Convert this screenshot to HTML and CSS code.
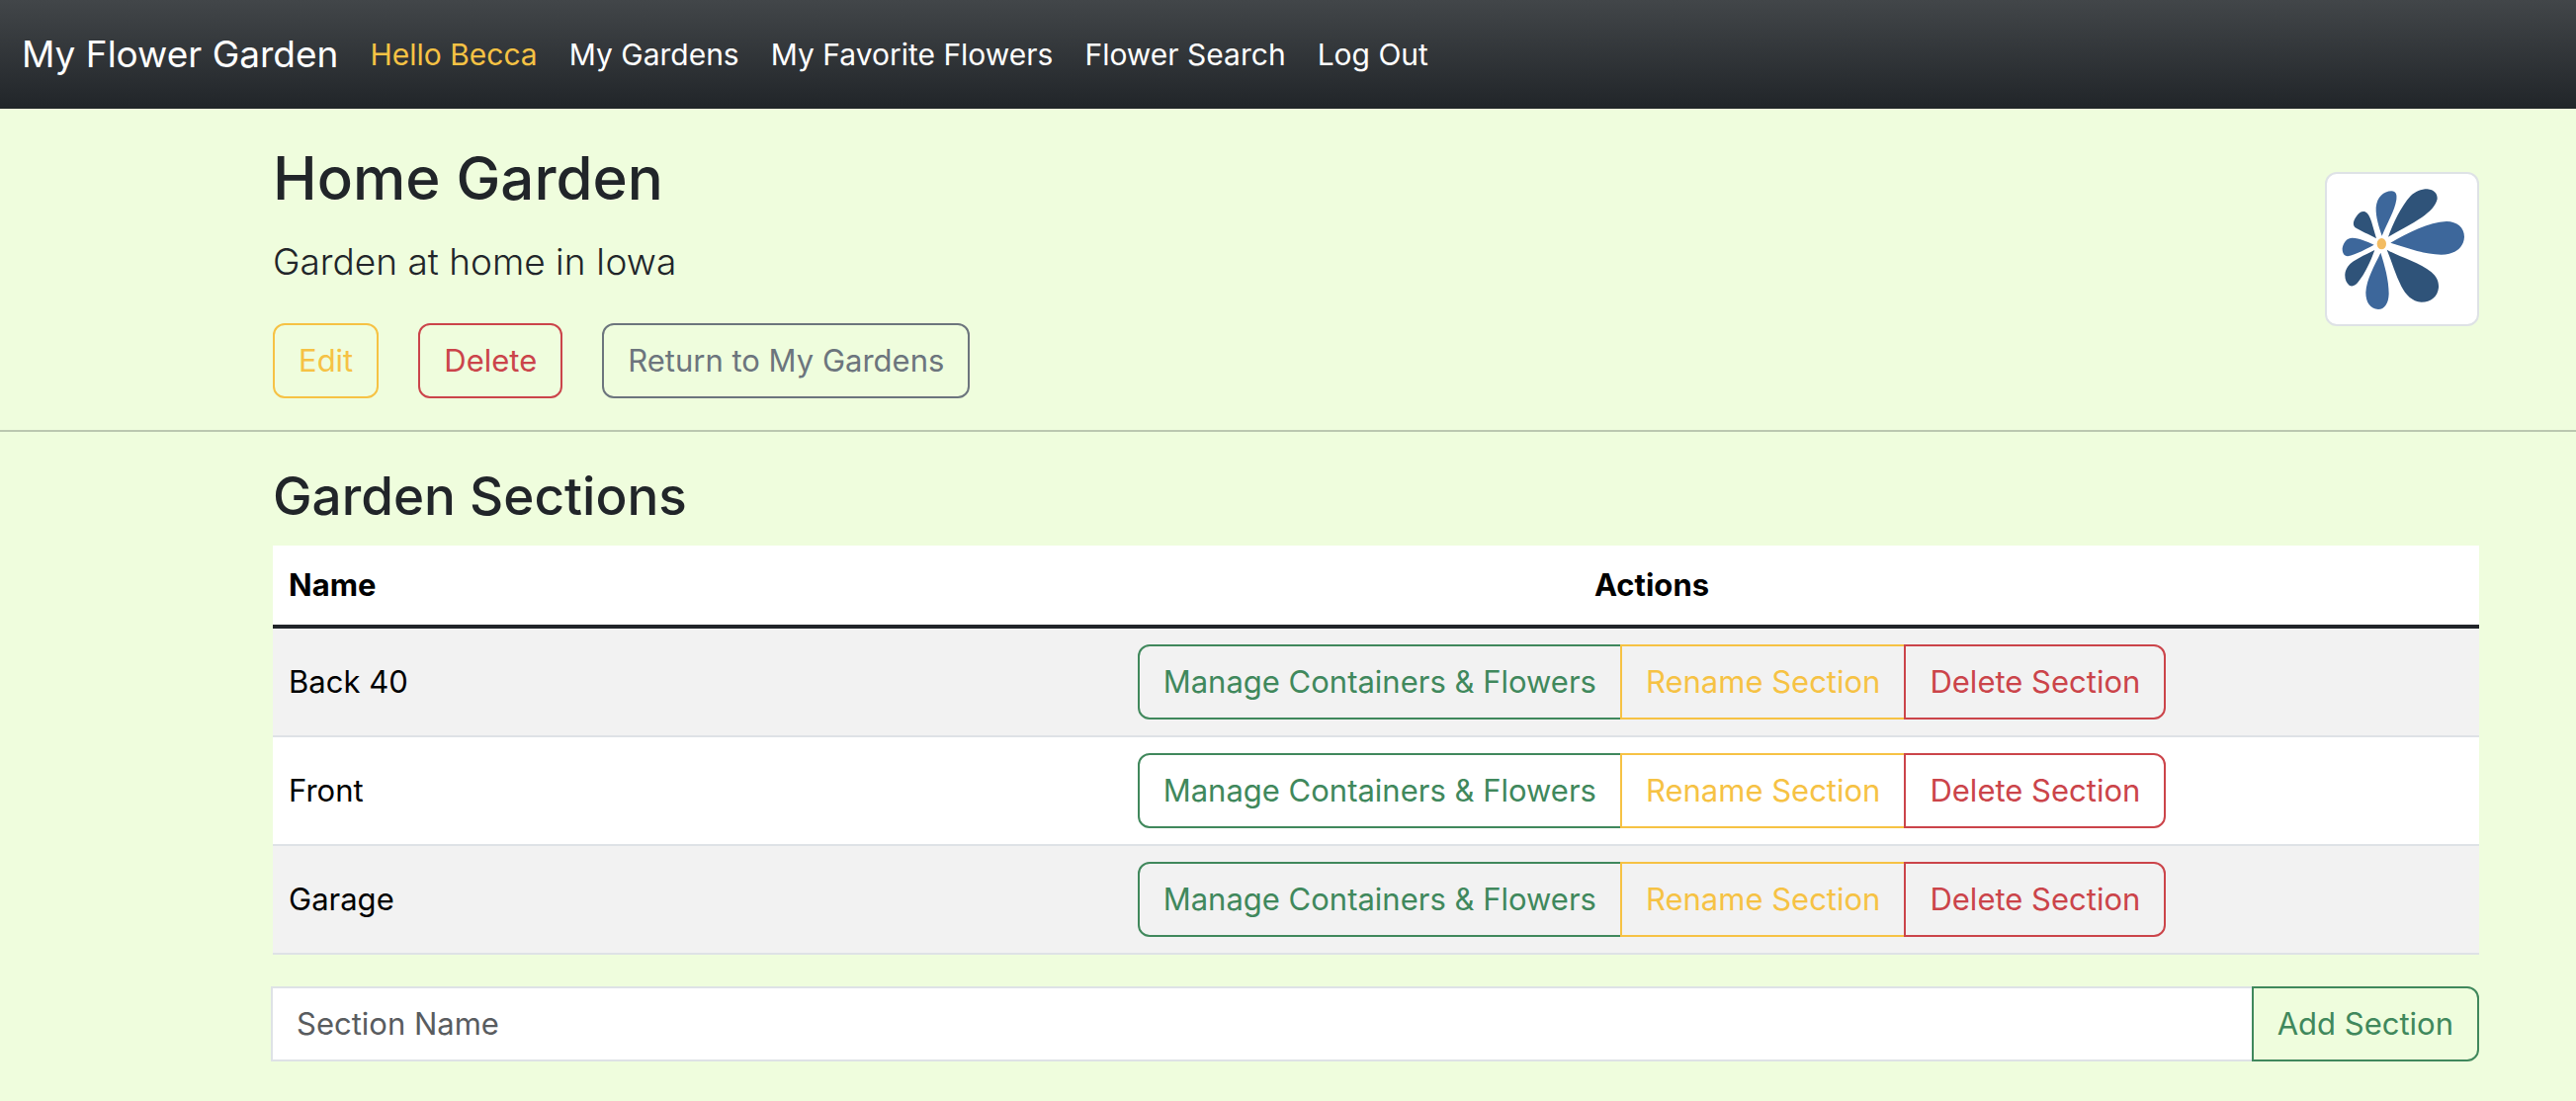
FILE: index.html
```html
<!DOCTYPE html>
<html lang="en">
<head>
  <meta charset="utf-8">
  <meta name="viewport" content="width=device-width, initial-scale=1">
  <title>My Flower Garden</title>
  <link rel="stylesheet" href="styles.css">
</head>
<body>
  <nav class="navbar">
    <a class="brand" href="#">My Flower Garden</a>
    <a class="nav-link greeting" href="#">Hello Becca</a>
    <a class="nav-link" href="#">My Gardens</a>
    <a class="nav-link" href="#">My Favorite Flowers</a>
    <a class="nav-link" href="#">Flower Search</a>
    <a class="nav-link" href="#">Log Out</a>
  </nav>

  <header class="garden">
    <div class="garden-info">
      <h1 class="garden-title">Home Garden</h1>
      <p class="lead">Garden at home in Iowa</p>
      <div class="garden-actions">
        <button type="button" class="btn warning">Edit</button>
        <button type="button" class="btn danger">Delete</button>
        <button type="button" class="btn secondary">Return to My Gardens</button>
      </div>
    </div>
    <div class="thumbnail">
      <svg class="flower" viewBox="66 72 408 408" role="img" aria-label="Flower">
        <g fill="#3d679b">
          <path d="M209 236C200 208 190 180 191 150C194 118 214 101 238 100C252 101 255 110 253 126C248 160 224 198 209 236Z"/>
          <path d="M235 257C290 225 350 195 405 192C437 192 459 211 459 239C457 274 428 293 389 293C335 292 285 272 235 257Z"/>
          <path d="M205 287C217 325 230 368 230 412C229 442 217 459 198 459C174 458 160 438 160 408C162 367 187 326 205 287Z"/>
          <path d="M185 263C158 277 128 294 105 298C93 297 88 286 89 273C93 253 104 242 119 242C142 243 164 253 185 263Z"/>
        </g>
        <g fill="#2f5379">
          <path d="M228 239C244 197 266 148 296 115C311 101 327 94 347 94C367 96 378 107 377 124C373 145 353 164 331 179C297 202 260 219 228 239Z"/>
          <path d="M224 278C265 302 323 315 359 346C375 360 382 374 381 393C378 421 358 437 329 437C300 435 281 414 268 389C249 352 239 314 224 278Z"/>
          <path d="M187 279C175 312 159 348 137 376C129 387 119 391 110 386C101 380 96 367 97 352C99 334 109 323 123 313C144 299 165 290 187 279Z"/>
          <path d="M192 244C171 232 142 220 127 210C119 200 123 188 132 176C139 166 148 160 158 163C168 168 172 178 177 192Z"/>
        </g>
        <ellipse cx="208" cy="260" rx="14" ry="17" fill="#f3bc62"/>
      </svg>
    </div>
  </header>

  <main class="sections">
    <h2 class="sections-title">Garden Sections</h2>
    <table class="table">
      <thead>
        <tr><th class="name-col" scope="col">Name</th><th class="actions-col" scope="col">Actions</th></tr>
      </thead>
      <tbody>
        <tr>
          <td>Back 40</td>
          <td class="actions-col"><div class="btn-group"><button type="button" class="btn success">Manage Containers &amp; Flowers</button><button type="button" class="btn warning">Rename Section</button><button type="button" class="btn danger">Delete Section</button></div></td>
        </tr>
        <tr>
          <td>Front</td>
          <td class="actions-col"><div class="btn-group"><button type="button" class="btn success">Manage Containers &amp; Flowers</button><button type="button" class="btn warning">Rename Section</button><button type="button" class="btn danger">Delete Section</button></div></td>
        </tr>
        <tr>
          <td>Garage</td>
          <td class="actions-col"><div class="btn-group"><button type="button" class="btn success">Manage Containers &amp; Flowers</button><button type="button" class="btn warning">Rename Section</button><button type="button" class="btn danger">Delete Section</button></div></td>
        </tr>
      </tbody>
    </table>
    <form class="add-form">
      <input class="text-input" type="text" placeholder="Section Name" aria-label="Section Name">
      <button type="button" class="btn success">Add Section</button>
    </form>
  </main>
</body>
</html>
```
FILE: styles.css
```css
*,
*::before,
*::after {
  box-sizing: border-box;
}

body {
  margin: 0;
  background: #effddd;
  color: #212529;
  font-family: Inter, Roboto, "Liberation Sans", sans-serif;
  font-size: 31px;
  line-height: 48px;
}

h1,
h2,
p {
  margin: 0;
}

.navbar {
  display: flex;
  align-items: center;
  gap: 32px;
  padding: 25px 22px;
  background: linear-gradient(#424649, #212529);
}

.brand,
.nav-link {
  color: #fff;
  text-decoration: none;
  white-space: nowrap;
}

.brand {
  font-size: 37px;
  line-height: 60px;
}

.nav-link {
  font-size: 30px;
}

.greeting {
  color: #f6c244;
}

.garden {
  display: flex;
  justify-content: space-between;
  align-items: flex-start;
  padding: 32px 98px 32px 276px;
  border-bottom: 2px solid #bbc7b0;
}

.garden-title {
  margin-bottom: 16px;
  font-size: 60px;
  font-weight: 500;
  line-height: 77px;
}

.lead {
  margin-bottom: 32px;
  font-size: 37px;
  font-weight: 300;
  line-height: 60px;
}

.garden-actions {
  display: flex;
  gap: 40px;
}

.thumbnail {
  width: 156px;
  margin-top: 32px;
  padding: 8px;
  border: 2px solid #dee2e6;
  border-radius: 12px;
  background: #fff;
}

.flower {
  display: block;
  width: 100%;
}

.btn {
  margin: 0;
  padding: 12px 24px;
  border: 2px solid currentColor;
  border-radius: 12px;
  background: transparent;
  font: inherit;
  white-space: nowrap;
  cursor: pointer;
}

.success {
  color: #40885c;
}

.warning {
  color: #f6c244;
}

.danger {
  color: #cb444a;
}

.secondary {
  color: #6c757d;
}

.btn-group {
  display: inline-flex;
  vertical-align: middle;
}

.btn-group .btn:not(:first-child) {
  margin-left: -2px;
  border-top-left-radius: 0;
  border-bottom-left-radius: 0;
}

.btn-group .btn:not(:last-child) {
  border-top-right-radius: 0;
  border-bottom-right-radius: 0;
}

.sections {
  padding: 32px 98px 40px 276px;
}

.sections-title {
  margin-bottom: 16px;
  font-size: 53px;
  font-weight: 500;
  line-height: 67px;
}

.table {
  width: 100%;
  margin-bottom: 32px;
  border-collapse: separate;
  border-spacing: 0;
  background: #fff;
  color: #000;
}

.table th,
.table td {
  padding: 16px;
  text-align: left;
}

.table th {
  border-bottom: 4px solid #212529;
  font-weight: 700;
}

.table td {
  border-bottom: 2px solid #dee2e6;
}

.table tbody tr:nth-child(odd) {
  background: #f2f2f2;
}

.name-col {
  width: 25%;
}

.table .actions-col {
  text-align: center;
}

.add-form {
  display: flex;
  margin-left: -2px;
}

.text-input {
  flex: 1;
  min-width: 0;
  padding: 12px 24px;
  border: 2px solid #dee2e6;
  border-radius: 0;
  background: #fff;
  color: #212529;
  font: inherit;
}

.text-input::placeholder {
  color: #595c5f;
  opacity: 1;
}

.add-form .btn {
  margin-left: -2px;
  border-top-left-radius: 0;
  border-bottom-left-radius: 0;
}
```
